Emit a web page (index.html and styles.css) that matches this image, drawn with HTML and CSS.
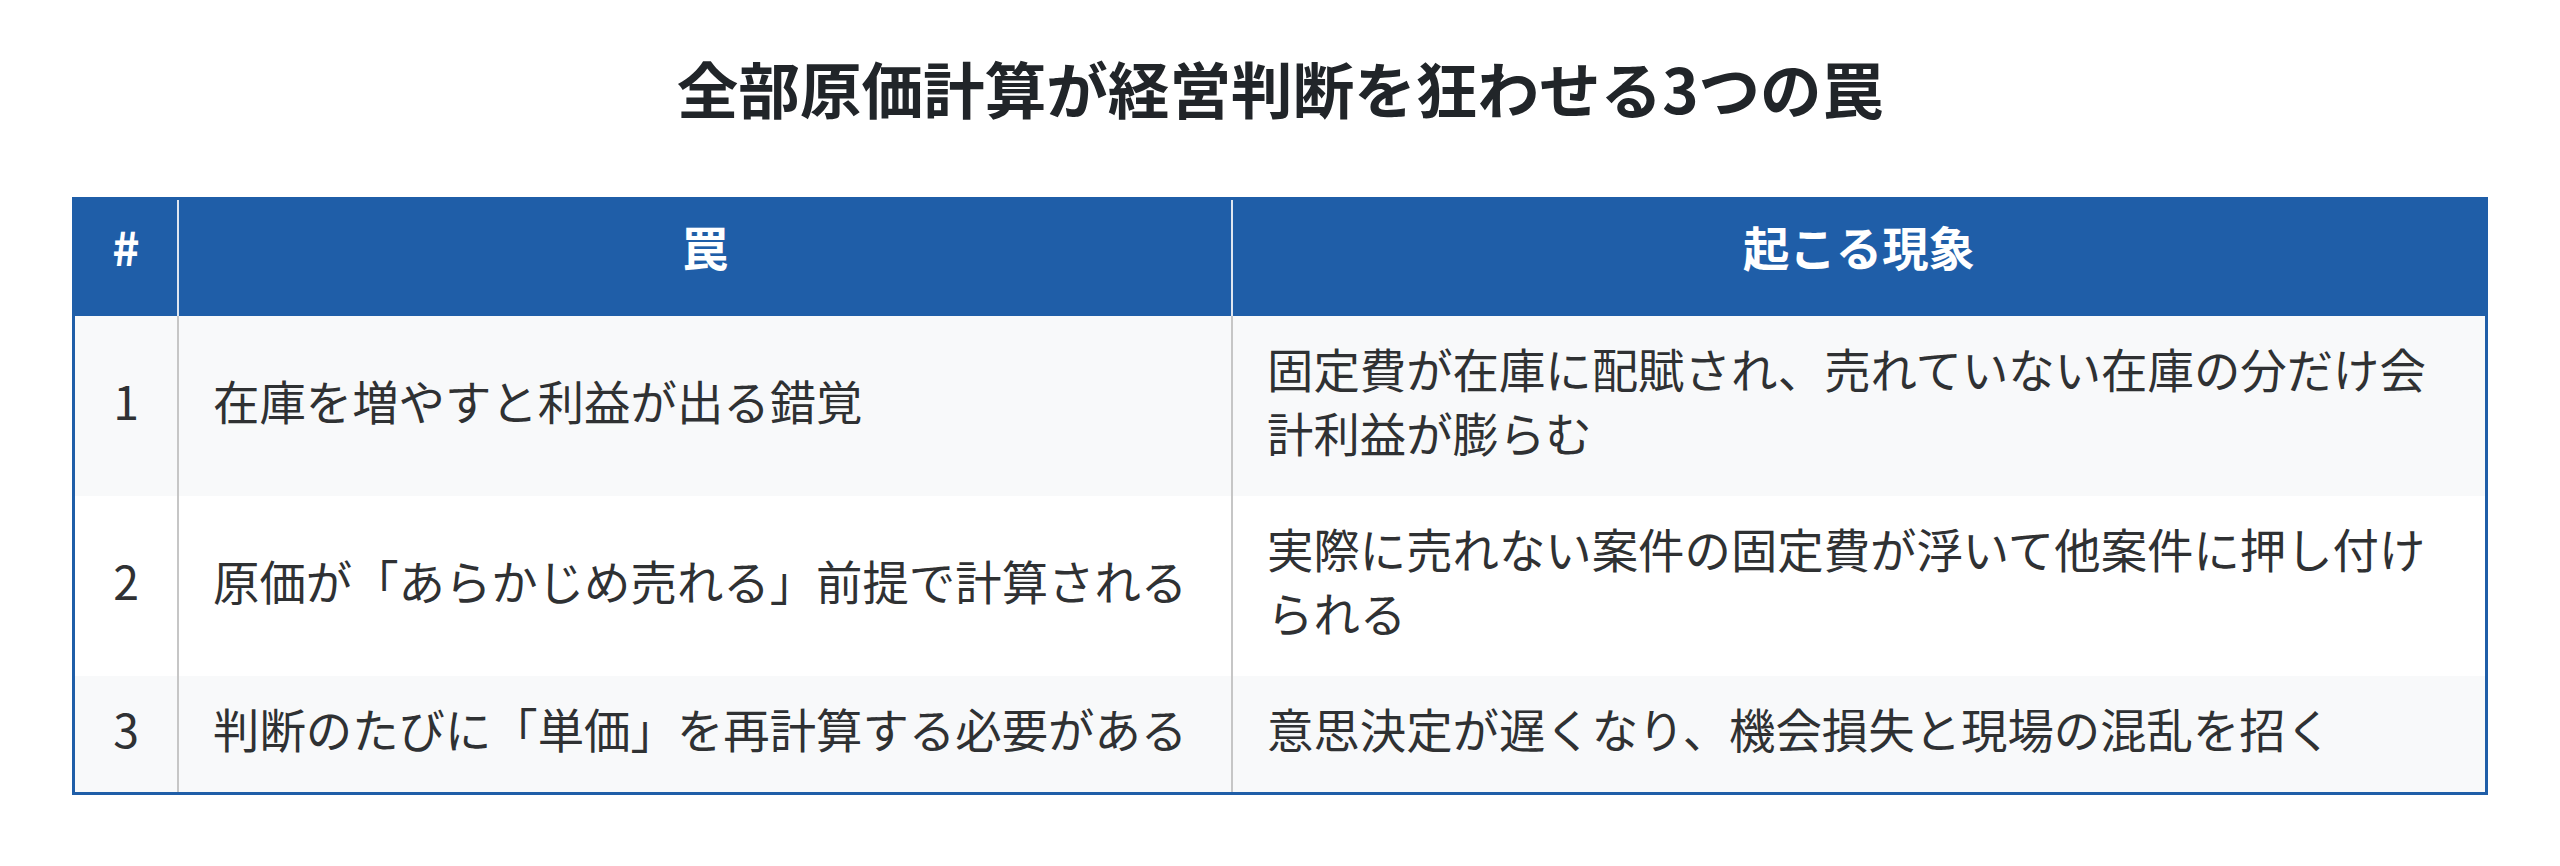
FILE: index.html
```html
<!DOCTYPE html>
<html lang="ja">
<head>
<meta charset="utf-8">
<title>全部原価計算が経営判断を狂わせる3つの罠</title>
<link rel="stylesheet" href="styles.css">
</head>
<body>
<main class="page">
  <h1 class="title">全部原価計算が経営判断を狂わせる3つの罠</h1>
  <table class="traps">
    <thead>
      <tr>
        <th class="col-num">#</th>
        <th class="col-trap">罠</th>
        <th class="col-effect">起こる現象</th>
      </tr>
    </thead>
    <tbody>
      <tr>
        <td class="num">1</td>
        <td>在庫を増やすと利益が出る錯覚</td>
        <td class="effect">固定費が在庫に配賦され、売れていない在庫の分だけ会計利益が膨らむ</td>
      </tr>
      <tr>
        <td class="num">2</td>
        <td>原価が「あらかじめ売れる」前提で計算される</td>
        <td class="effect">実際に売れない案件の固定費が浮いて他案件に押し付けられる</td>
      </tr>
      <tr>
        <td class="num">3</td>
        <td>判断のたびに「単価」を再計算する必要がある</td>
        <td class="effect">意思決定が遅くなり、機会損失と現場の混乱を招く</td>
      </tr>
    </tbody>
  </table>
</main>
</body>
</html>
```

FILE: styles.css
```css
html, body {
  margin: 0;
  padding: 0;
  background: #ffffff;
}

body {
  font-family: "Noto Sans CJK JP", "Noto Sans", sans-serif;
  color: #2f3133;
}

.page {
  padding: 0 72px;
}

.title {
  margin: 45px 0 66px;
  font-size: 61.6px;
  line-height: 86px;
  font-weight: 700;
  color: #212529;
  text-align: center;
}

.traps {
  width: 100%;
  table-layout: fixed;
  border-collapse: separate;
  border-spacing: 0;
  border: 3px solid #1f5ea8;
  font-size: 46.4px;
  line-height: 64px;
}

.traps th,
.traps td {
  box-sizing: border-box;
}

.traps th {
  background: #1f5ea8;
  color: #ffffff;
  font-weight: 700;
  text-align: center;
  padding: 14px 20px 38px;
}

.traps th + th {
  border-left: 2px solid #dfe6f0;
}

.col-num {
  width: 102px;
}

.col-trap {
  width: 1054px;
}

.traps td {
  padding: 20px 34px 32px;
  vertical-align: middle;
  text-align: left;
}

.traps td + td {
  border-left: 2px solid #c6c6c6;
}

.traps td.num {
  text-align: center;
  padding-left: 10px;
  padding-right: 10px;
}

.traps td.effect {
  vertical-align: top;
}

.traps tbody tr:nth-child(odd) td {
  background: #f8f9fa;
}

.traps tbody tr:nth-child(even) td {
  background: #ffffff;
}
```
